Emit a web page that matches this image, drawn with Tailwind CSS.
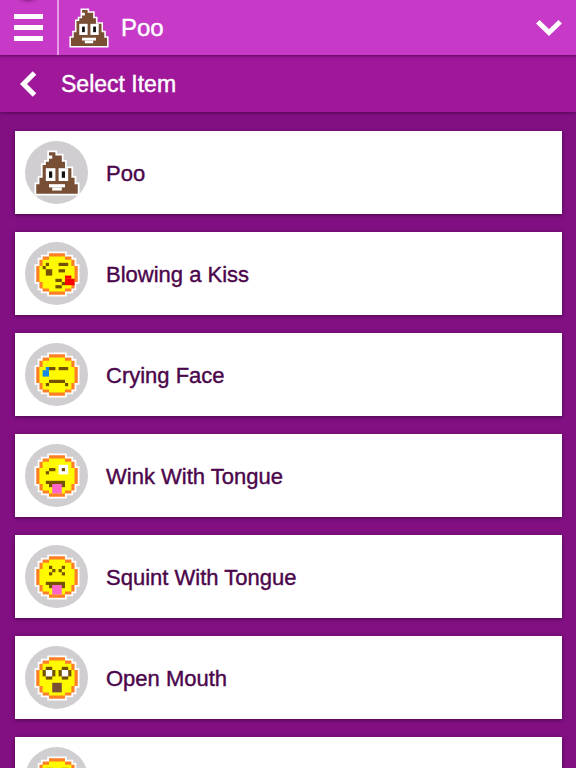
<!DOCTYPE html>
<html lang="en">

<head>
    <meta charset="UTF-8">
    <meta name="viewport" content="width=device-width, initial-scale=1.0">
    <title>Select Item</title>
    <script src="https://cdn.jsdelivr.net/npm/@tailwindcss/browser@4"></script>
</head>

<body class="flex h-screen flex-col overflow-hidden bg-[#821083] font-['Liberation_Sans',Arial,sans-serif] text-[22px]">

    <!-- Header -->
    <header class="relative z-20 flex h-[55px] shrink-0 items-center bg-[#c739c7] text-white shadow-[0_1px_3px_rgba(60,0,60,0.7)]">
        <div class="absolute -top-6 left-4 size-6 rounded-full shadow-[0_0_4px_rgba(60,0,60,0.8)]"></div>
        <button class="flex h-full w-[57px] items-center pl-[14px]" aria-label="Menu">
            <svg class="h-[27px] w-[29px]" viewBox="0 0 29 27" fill="currentColor">
                <path d="M0 0h29v5H0zM0 11h29v5H0zM0 22h29v5H0z" />
            </svg>
        </button>
        <div class="flex h-full flex-1 items-center border-l-2 border-[#e79be7] pl-[10px]">
            <svg class="h-10 w-10" data-icon="poo"></svg>
            <h1 class="ml-3 text-2xl [-webkit-text-stroke:0.4px]">Poo</h1>
        </div>
        <button class="flex h-full items-center pr-[14px]" aria-label="Expand">
            <svg class="h-4 w-[26px]" viewBox="0 0 26 16" fill="none" stroke="currentColor" stroke-width="5">
                <path d="M1.8 1.8L13 12.5L24.2 1.8" />
            </svg>
        </button>
    </header>

    <!-- Title bar -->
    <nav class="relative z-10 flex h-[57px] shrink-0 items-center bg-[#9e1899] pl-5 text-white shadow-[0_1px_3px_rgba(60,0,60,0.7)]">
        <button aria-label="Back">
            <svg class="h-[26px] w-[17px]" viewBox="0 0 17 26" fill="none" stroke="currentColor" stroke-width="5">
                <path d="M14.5 2L3.5 13L14.5 24" />
            </svg>
        </button>
        <h2 class="ml-6 pt-0.5 text-[23px] [-webkit-text-stroke:0.4px]">Select Item</h2>
    </nav>

    <!-- Items -->
    <main class="flex-1 overflow-hidden pt-[19px] pr-[14px] pl-[15px]">
        <ul id="items" class="space-y-[18px]"></ul>
    </main>

    <script>
        // Cell rectangles on a 13x13 grid: [colour, x, y, width, height]
        const brown = "#784f35", dark = "#745000", orange = "#ff7f27", yellow = "#fffa00";
        const round = "M4 0h5v1h2v1h1v2h1v5h-1v2h-1v1h-2v1h-5v-1h-2v-1h-1v-2h-1v-5h1v-2h1v-1h2z";
        const inner = "M4 1h5v1h2v2h1v5h-1v2h-2v1h-5v-1h-2v-2h-1v-5h1v-2h2z";
        const poo = "M4 0h2v1h2v2h1v2h2v3h1v2h1v3H0v-3h1v-2h1v-4h1v-1h1v-1h1v-1H4z";

        const faces = {
            kiss: [[dark, 3, 3, 1, 1], [dark, 2, 4, 1, 1], [dark, 3, 5, 2, 2], [dark, 7, 3, 3, 1], [dark, 7, 5, 2, 1],
                [dark, 6, 8, 2, 1], [dark, 8, 9, 1, 1], [dark, 6, 10, 2, 1], ["#f80000", 9, 7, 2, 1], ["#f80000", 9, 8, 3, 2]],
            cry: [[dark, 4, 4, 2, 1], [dark, 7, 4, 3, 1], ["#1489e8", 3, 4, 1, 1], ["#1489e8", 2, 5, 2, 2],
                [dark, 4, 8, 5, 1], [dark, 3, 9, 1, 1], [dark, 9, 9, 1, 1]],
            wink: [["#fff", 7, 3, 3, 3], [dark, 8, 4, 1, 1], [dark, 4, 4, 2, 1], [dark, 3, 5, 1, 1],
                [dark, 3, 8, 6, 1], [dark, 4, 9, 5, 1], ["#ff64c8", 5, 9, 3, 3]],
            squint: [[dark, 4, 3, 1, 1], [dark, 5, 4, 1, 1], [dark, 4, 5, 1, 1], [dark, 8, 3, 1, 1], [dark, 7, 4, 1, 1],
                [dark, 8, 5, 1, 1], [dark, 3, 8, 6, 1], [dark, 4, 9, 5, 1], ["#ff64c8", 5, 9, 3, 3]],
            open: [[dark, 3, 3, 2, 4], [dark, 2, 4, 4, 2], ["#fff", 3, 4, 2, 2], [dark, 8, 3, 2, 4], [dark, 7, 4, 4, 2],
                ["#fff", 8, 4, 2, 2], [brown, 5, 8, 3, 3]]
        };

        const rects = cells => cells.map(([fill, x, y, w, h]) =>
            `<rect x="${x}" y="${y}" width="${w}" height="${h}" fill="${fill}"/>`).join("");

        function drawIcon(name) {
            if (name === "poo") {
                return `<path d="${poo}" fill="${brown}" stroke="#fff" stroke-width="1.1" paint-order="stroke"/>`
                    + rects([["#fff", 3, 5, 3, 4], ["#fff", 7, 5, 3, 4], ["#111", 4, 6, 1, 2], ["#111", 8, 6, 1, 2], ["#fff", 4, 10, 5, 1], ["#fff", 5, 11, 3, 1]]);
            }
            return `<path d="${round}" fill="${orange}" stroke="#fff" stroke-width="1.1" paint-order="stroke"/>
                <path d="${inner}" fill="${yellow}"/>` + rects(faces[name]);
        }

        const items = [
            { name: "Poo", icon: "poo" },
            { name: "Blowing a Kiss", icon: "kiss" },
            { name: "Crying Face", icon: "cry" },
            { name: "Wink With Tongue", icon: "wink" },
            { name: "Squint With Tongue", icon: "squint" },
            { name: "Open Mouth", icon: "open" },
            { name: "", icon: "open" }
        ];

        document.getElementById("items").innerHTML = items.map(item => `
            <li>
                <button class="flex h-[83px] w-full items-center bg-white pl-[10px] text-left text-[#4b064b] shadow-[0_1px_4px_rgba(50,0,50,0.7)]">
                    <span class="flex size-[63px] items-center justify-center rounded-full bg-[#d0ced0]">
                        <svg class="size-[46px]" data-icon="${item.icon}"></svg>
                    </span>
                    <span class="ml-[18px] pt-0.5 [-webkit-text-stroke:0.4px]">${item.name}</span>
                </button>
            </li>`).join("");

        document.querySelectorAll("[data-icon]").forEach(svg => {
            svg.setAttribute("viewBox", "-0.7 -0.7 14.4 14.4");
            svg.innerHTML = drawIcon(svg.dataset.icon);
        });
    </script>
</body>

</html>
